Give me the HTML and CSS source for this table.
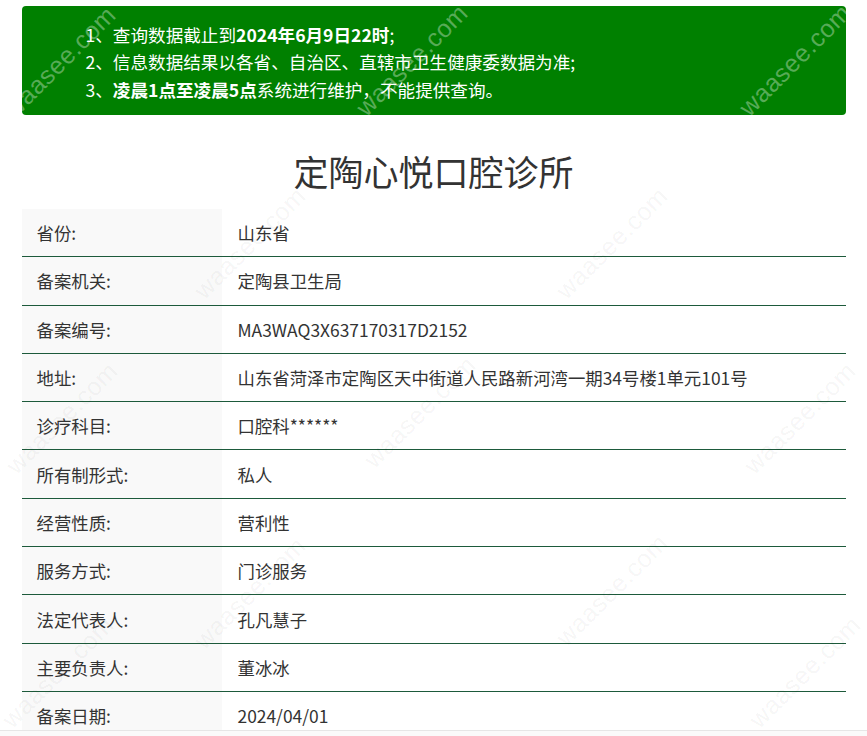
FILE: index.html
```html
<!DOCTYPE html>
<html lang="zh-CN">
<head>
<meta charset="utf-8">
<title>定陶心悦口腔诊所</title>
<link rel="stylesheet" href="styles.css">
</head>
<body>
<div class="page">
  <div class="notice">
    <p>1、查询数据截止到<b>2024年6月9日22时</b>;</p>
    <p>2、信息数据结果以各省、自治区、直辖市卫生健康委数据为准;</p>
    <p>3、<b>凌晨1点至凌晨5点</b>系统进行维护，不能提供查询。</p>
  </div>
  <h1 class="title">定陶心悦口腔诊所</h1>
  <div class="info">
    <div class="row"><div class="label">省份:</div><div class="value">山东省</div></div>
    <div class="row"><div class="label">备案机关:</div><div class="value">定陶县卫生局</div></div>
    <div class="row"><div class="label">备案编号:</div><div class="value">MA3WAQ3X637170317D2152</div></div>
    <div class="row"><div class="label">地址:</div><div class="value">山东省菏泽市定陶区天中街道人民路新河湾一期34号楼1单元101号</div></div>
    <div class="row"><div class="label">诊疗科目:</div><div class="value">口腔科******</div></div>
    <div class="row"><div class="label">所有制形式:</div><div class="value">私人</div></div>
    <div class="row"><div class="label">经营性质:</div><div class="value">营利性</div></div>
    <div class="row"><div class="label">服务方式:</div><div class="value">门诊服务</div></div>
    <div class="row"><div class="label">法定代表人:</div><div class="value">孔凡慧子</div></div>
    <div class="row"><div class="label">主要负责人:</div><div class="value">董冰冰</div></div>
    <div class="row"><div class="label">备案日期:</div><div class="value">2024/04/01</div></div>
  </div>
</div>
<div class="wm-layer">
  <span class="wm wm-light w1">waasee.com</span>
  <span class="wm wm-light w2">waasee.com</span>
  <span class="wm wm-light w3">waasee.com</span>
  <span class="wm w4">waasee.com</span>
  <span class="wm w5">waasee.com</span>
  <span class="wm w6">waasee.com</span>
  <span class="wm w7">waasee.com</span>
  <span class="wm w8">waasee.com</span>
  <span class="wm w9">waasee.com</span>
  <span class="wm w10">waasee.com</span>
  <span class="wm w11">waasee.com</span>
  <span class="wm w12">waasee.com</span>
</div>
<div class="bottom-bar"></div>
</body>
</html>
```
FILE: styles.css
```css
html, body {
  margin: 0;
  padding: 0;
  background: #fff;
}
body {
  font-family: "Noto Sans CJK SC", "Noto Sans", sans-serif;
  color: #333;
  position: relative;
  min-height: 736px;
  overflow: hidden;
}
.page {
  width: 824px;
  margin: 0 auto;
  padding-top: 6px;
}
.notice {
  background: #008000;
  border-radius: 4px;
  color: #fff;
  padding: 14.5px 0 12px 64px;
  font-size: 17.6px;
  line-height: 27.5px;
}
.notice p {
  margin: 0;
}
.notice b {
  font-weight: 700;
}
.title {
  margin: 31px 0 13px;
  text-align: center;
  font-size: 35px;
  line-height: 50px;
  font-weight: 400;
  color: #333;
}
.info {
  display: flex;
  flex-direction: column;
  font-size: 17.4px;
}
.row {
  display: grid;
  grid-template-columns: 200px 1fr;
  height: 47.3px;
  border-bottom: 1px solid #1d5a3b;
}
.row:last-child {
  border-bottom: none;
}
.label,
.value {
  display: flex;
  align-items: center;
  color: #333;
}
.label {
  padding-left: 15px;
  background: #f9f9f9;
}
.value {
  padding-left: 16px;
}
.wm-layer {
  position: absolute;
  inset: 0;
  pointer-events: none;
}
.wm {
  position: absolute;
  font-family: "Liberation Sans", Arial, sans-serif;
  font-size: 25px;
  letter-spacing: 0.5px;
  color: rgba(0, 0, 0, 0.05);
  transform: translate(-50%, -50%) rotate(-45deg);
  white-space: nowrap;
}
.wm-light {
  color: rgba(255, 255, 255, 0.35);
}
.w1 { left: 60px; top: 62px; }
.w2 { left: 412px; top: 60px; }
.w3 { left: 795px; top: 60px; }
.w4 { left: 250px; top: 243px; }
.w5 { left: 612px; top: 243px; }
.w6 { left: 62px; top: 418px; }
.w7 { left: 420px; top: 412px; }
.w8 { left: 800px; top: 418px; }
.w9 { left: 250px; top: 593px; }
.w10 { left: 612px; top: 590px; }
.w11 { left: 58px; top: 672px; }
.w12 { left: 805px; top: 672px; }
.bottom-bar {
  position: fixed;
  left: 0;
  right: 0;
  bottom: 0;
  height: 5px;
  border-top: 1px solid #e6e6e6;
  background: #fafafa;
}
```
